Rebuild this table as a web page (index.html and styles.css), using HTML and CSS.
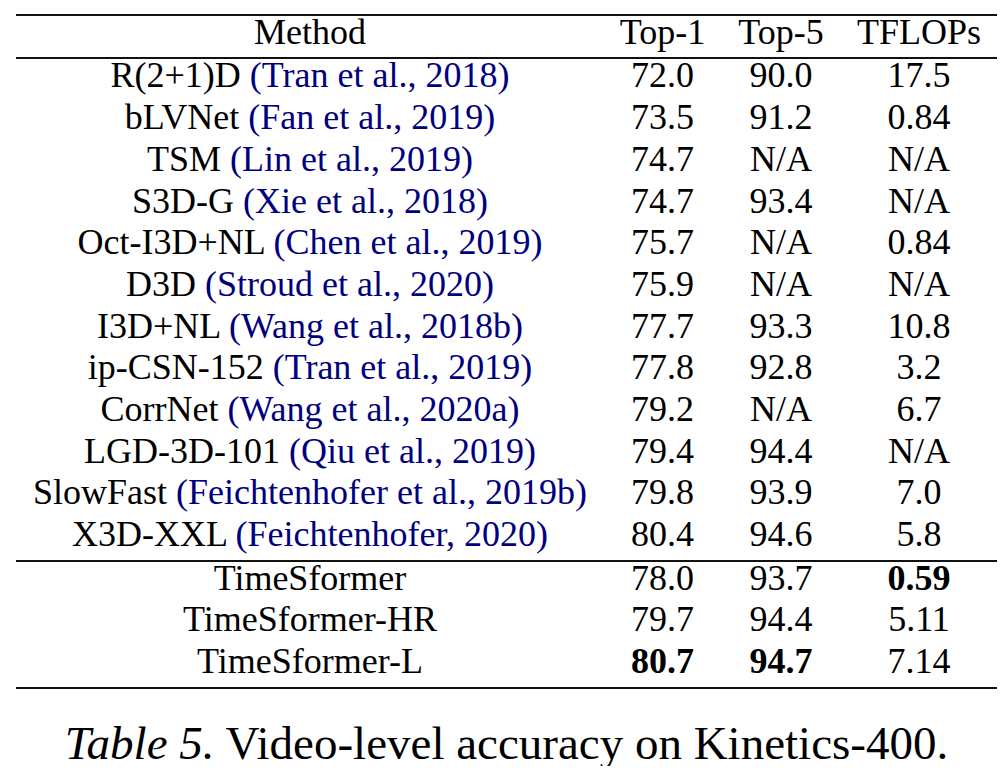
FILE: index.html
```html
<!DOCTYPE html>
<html>
<head>
<meta charset="utf-8">
<link rel="stylesheet" href="styles.css">
</head>
<body>
<div class="page">
<table class="results">
  <colgroup>
    <col class="c-method"><col class="c-top1"><col class="c-top5"><col class="c-flops">
  </colgroup>
  <thead>
    <tr><th>Method</th><th>Top-1</th><th>Top-5</th><th>TFLOPs</th></tr>
  </thead>
  <tbody>
    <tr><td>R(2+1)D <span class="cite">(Tran et al., 2018)</span></td><td>72.0</td><td>90.0</td><td>17.5</td></tr>
    <tr><td>bLVNet <span class="cite">(Fan et al., 2019)</span></td><td>73.5</td><td>91.2</td><td>0.84</td></tr>
    <tr><td>TSM <span class="cite">(Lin et al., 2019)</span></td><td>74.7</td><td>N/A</td><td>N/A</td></tr>
    <tr><td>S3D-G <span class="cite">(Xie et al., 2018)</span></td><td>74.7</td><td>93.4</td><td>N/A</td></tr>
    <tr><td>Oct-I3D+NL <span class="cite">(Chen et al., 2019)</span></td><td>75.7</td><td>N/A</td><td>0.84</td></tr>
    <tr><td>D3D <span class="cite">(Stroud et al., 2020)</span></td><td>75.9</td><td>N/A</td><td>N/A</td></tr>
    <tr><td>I3D+NL <span class="cite">(Wang et al., 2018b)</span></td><td>77.7</td><td>93.3</td><td>10.8</td></tr>
    <tr><td>ip-CSN-152 <span class="cite">(Tran et al., 2019)</span></td><td>77.8</td><td>92.8</td><td>3.2</td></tr>
    <tr><td>CorrNet <span class="cite">(Wang et al., 2020a)</span></td><td>79.2</td><td>N/A</td><td>6.7</td></tr>
    <tr><td>LGD-3D-101 <span class="cite">(Qiu et al., 2019)</span></td><td>79.4</td><td>94.4</td><td>N/A</td></tr>
    <tr><td>SlowFast <span class="cite">(Feichtenhofer et al., 2019b)</span></td><td>79.8</td><td>93.9</td><td>7.0</td></tr>
    <tr><td>X3D-XXL <span class="cite">(Feichtenhofer, 2020)</span></td><td>80.4</td><td>94.6</td><td>5.8</td></tr>
  </tbody>
  <tbody class="ours">
    <tr class="first"><td>TimeSformer</td><td>78.0</td><td>93.7</td><td><b>0.59</b></td></tr>
    <tr><td>TimeSformer-HR</td><td>79.7</td><td>94.4</td><td>5.11</td></tr>
    <tr class="last"><td>TimeSformer-L</td><td><b>80.7</b></td><td><b>94.7</b></td><td>7.14</td></tr>
  </tbody>
</table>
<p class="caption"><i>Table 5.</i> Video-level accuracy on Kinetics-400.</p>
</div>
</body>
</html>
```

FILE: styles.css
```css
html, body {
  margin: 0;
  padding: 0;
  background: #ffffff;
}
body {
  font-family: "Liberation Serif", "Times New Roman", serif;
  color: #000;
}
.page {
  padding-top: 14px;
  padding-left: 16px;
}
.results {
  width: 981px;
  table-layout: fixed;
  border-collapse: separate;
  border-spacing: 0;
  font-size: 36px;
}
.c-method { width: 588px; }
.c-top1 { width: 117px; }
.c-top5 { width: 120px; }
.c-flops { width: 156px; }
.results th,
.results td {
  font-weight: normal;
  text-align: center;
  white-space: nowrap;
  padding: 0 0 8.6px 0;
  line-height: 33.1px;
  height: 33.1px;
}
.results thead th {
  border-top: 2px solid #111;
  border-bottom: 2px solid #111;
  padding-bottom: 8.4px;
}
.results .ours tr.first td {
  border-top: 2px solid #111;
}
.results .ours tr.last td {
  border-bottom: 2px solid #111;
}
.results b {
  font-weight: bold;
}
.cite {
  color: #00007f;
}
.caption {
  margin: 31.5px 0 0 0;
  width: 981px;
  text-align: center;
  font-size: 47px;
  line-height: 46px;
}
```
